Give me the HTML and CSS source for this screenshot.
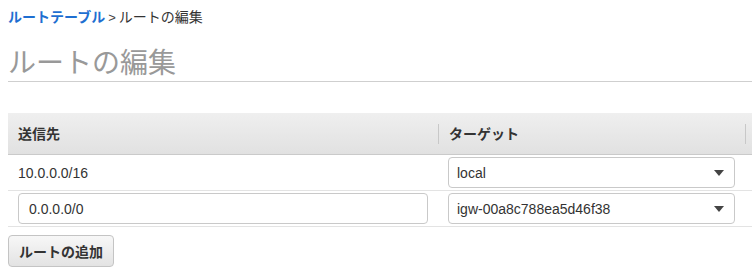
FILE: index.html
```html
<!DOCTYPE html>
<html lang="ja">
<head>
<meta charset="utf-8">
<title>ルートの編集</title>
<link rel="stylesheet" href="styles.css">
</head>
<body>
<div class="page">
  <div class="breadcrumb"><a class="crumb-link" href="#">ルートテーブル</a><span class="crumb-sep">&gt;</span><span class="crumb-current">ルートの編集</span></div>
  <h1 class="title">ルートの編集</h1>
  <div class="routes">
    <div class="row head">
      <div class="cell"><span class="head-label">送信先</span></div>
      <div class="cell"><span class="head-label sep">ターゲット</span></div>
      <div class="cell"><span class="head-label sep"></span></div>
    </div>
    <div class="row">
      <div class="cell"><span class="static">10.0.0.0/16</span></div>
      <div class="cell"><div class="select"><span>local</span><i class="caret"></i></div></div>
      <div class="cell"></div>
    </div>
    <div class="row">
      <div class="cell"><div class="input">0.0.0.0/0</div></div>
      <div class="cell"><div class="select"><span>igw-00a8c788ea5d46f38</span><i class="caret"></i></div></div>
      <div class="cell"></div>
    </div>
  </div>
  <button class="btn" type="button">ルートの追加</button>
</div>
</body>
</html>
```
FILE: styles.css
```css
html, body {
  margin: 0;
  background: #fff;
}
.page {
  padding-left: 8px;
  font-family: "Liberation Sans", "Noto Sans CJK JP", sans-serif;
  font-size: 14px;
  color: #333;
}
.breadcrumb {
  padding-top: 8px;
  line-height: 18px;
  height: 18px;
}
.crumb-link {
  color: #1f6fd1;
  font-weight: bold;
  text-decoration: none;
}
.crumb-sep {
  margin: 0 3px;
  color: #444;
  font-size: 13px;
}
.crumb-current {
  color: #333;
}
.title {
  margin: 21px 0 0;
  font-size: 28px;
  font-weight: normal;
  line-height: 34px;
  color: #999;
  border-bottom: 1px solid #cfcfcf;
}
.routes {
  margin-top: 31px;
}
.row {
  display: grid;
  grid-template-columns: 430px 307px 7px;
  height: 35px;
  border-bottom: 1px solid #e3e3e3;
}
.row.head {
  height: 41px;
  background: linear-gradient(#efefef, #e1e1e1);
  border-bottom: 1px solid #cacaca;
}
.cell {
  display: flex;
  align-items: center;
  padding-left: 10px;
  box-sizing: border-box;
  min-width: 0;
}
.head .cell {
  padding-left: 0;
}
.head .cell:first-child {
  padding-left: 10px;
}
.head-label {
  font-weight: bold;
  line-height: 20px;
}
.head-label.sep {
  border-left: 1px solid #c8c8c8;
  padding-left: 10px;
  height: 20px;
}
.static {
  line-height: 18px;
  padding-top: 1px;
}
.input {
  width: 410px;
  height: 31px;
  box-sizing: border-box;
  border: 1px solid #c9c9c9;
  border-radius: 4px;
  padding-left: 10px;
  display: flex;
  align-items: center;
  background: #fff;
}
.select {
  width: 287px;
  height: 31px;
  box-sizing: border-box;
  border: 1px solid #c9c9c9;
  border-radius: 4px;
  padding: 0 10px 0 8px;
  display: flex;
  align-items: center;
  justify-content: space-between;
  background: #fff;
}
.caret {
  width: 0;
  height: 0;
  border-left: 5px solid transparent;
  border-right: 5px solid transparent;
  border-top: 6px solid #444;
}
.btn {
  margin-top: 8px;
  height: 32px;
  padding: 0 10px;
  font-family: "Liberation Sans", "Noto Sans CJK JP", sans-serif;
  font-size: 14px;
  font-weight: bold;
  color: #333;
  background: linear-gradient(#f7f7f7, #e3e3e3);
  border: 1px solid #c4c4c4;
  border-radius: 4px;
}
```
